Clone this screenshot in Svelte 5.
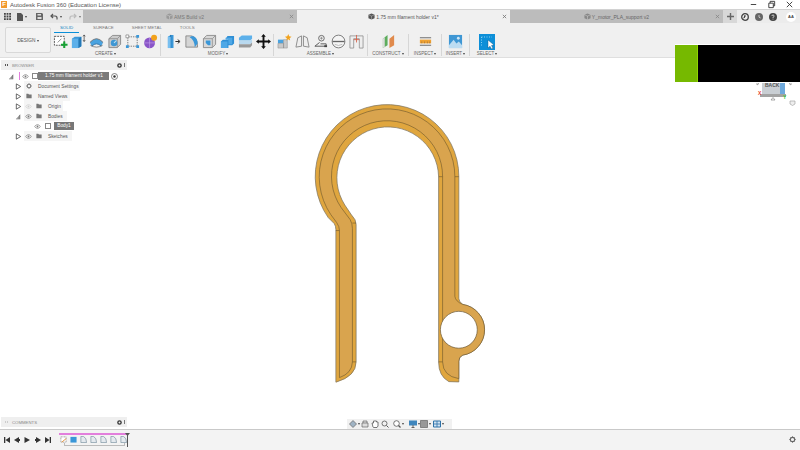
<script>
  const tabs = ['SOLID', 'SURFACE', 'SHEET METAL', 'TOOLS']

  const tree = [
    { name: 'Document Settings', icon: 'gear', width: 56 },
    { name: 'Named Views', icon: 'folder', width: 46 },
    { name: 'Origin', icon: 'folder', width: 39, hidden: true, eye: true },
    { name: 'Bodies', icon: 'folder', width: 43, open: true, eye: true },
    { name: 'Body1', icon: 'body', child: true, eye: true },
    { name: 'Sketches', icon: 'folder', width: 48, eye: true }
  ]

  const timeline = ['sketch', 'box', 'f', 'f', 'f', 'f', 'f']
</script>

{#snippet eye(off)}
  <svg class="eye" class:off viewBox="0 0 8 6"><path d="M.5 3Q4-1.5 7.500 3 4 7.500.5 3Z" fill="none" stroke="#777" stroke-width=".8"/><circle cx="4" cy="3" r="1.100" fill="#777"/></svg>
{/snippet}

{#snippet caret(open)}
  {#if open}
    <svg class="caret" viewBox="0 0 8 8"><path d="M1 7 6 1.500V7Z" fill="#666"/><path d="M3 7V5M4.500 7V3.500" stroke="#fff" stroke-width=".5"/></svg>
  {:else}
    <svg class="caret" viewBox="0 0 8 8"><path d="M1.500 1 6.500 4 1.500 7Z" fill="#fff" stroke="#444" stroke-width=".9"/></svg>
  {/if}
{/snippet}

<div class="app">
  <div class="title">
    <span class="logo">F</span>
    <span class="title-text">Autodesk Fusion 360 (Education License)</span>
    <div class="winctl">
      <svg viewBox="0 0 10 10"><path d="M2 5H8" stroke="#333"/></svg>
      <svg viewBox="0 0 10 10"><path d="M2 3.500H7V8.500H2ZM3.500 3.500V1.500H8.500V6.500H7" fill="none" stroke="#333" stroke-width="1"/></svg>
      <svg viewBox="0 0 10 10"><path d="M2 2 8 8M8 2 2 8" stroke="#333"/></svg>
    </div>
  </div>

  <div class="tabbar">
    <div class="quick">
      <svg width="7" height="7" viewBox="0 0 7 7" fill="#444"><path d="M0 0h1.800v1.800H0zM2.600 0h1.800v1.800H2.600zM5.200 0H7v1.800H5.200zM0 2.600h1.800v1.800H0zM2.600 2.600h1.800v1.800H2.600zM5.200 2.600H7v1.800H5.200zM0 5.200h1.800V7H0zM2.600 5.200h1.800V7H2.600zM5.200 5.200H7V7H5.200z"/></svg>
      <span class="q-file"><svg width="6" height="8" viewBox="0 0 6 8"><path d="M0 0H4L6 2V8H0Z" fill="#555"/></svg><i></i></span>
      <svg class="q-save" width="7" height="7" viewBox="0 0 7 7"><path d="M0 0H6L7 1V7H0Z" fill="#666"/><path d="M1.500 1H5V2.500H1.500ZM1.500 4H5.500V6H1.500Z" fill="#ddd"/></svg>
      <span class="q-undo"><svg width="8" height="7" viewBox="0 0 8 7"><path d="M3 1 1 3 3 5M1 3H5Q7.500 3 7 6.500" fill="none" stroke="#555" stroke-width="1.200"/></svg><i></i></span>
      <span class="q-redo"><svg width="8" height="7" viewBox="0 0 8 7"><path d="M5 1 7 3 5 5M7 3H3Q.5 3 1 6.500" fill="none" stroke="#aaa" stroke-width="1.200"/></svg><i></i></span>
    </div>
    <div class="doc-tab t1">
      <span class="doc-name"><svg class="cube" viewBox="0 0 8 8"><path d="M4 .5 7.500 2V6L4 7.500.5 6V2Z" fill="#999"/><path d="M.5 2 4 3.500 7.500 2M4 3.500V7.500" stroke="#ddd" stroke-width=".5" fill="none"/></svg>AMS Build v2</span>
      <svg class="x" viewBox="0 0 6 6"><path d="M1 1 5 5M5 1 1 5" stroke="#888"/></svg>
    </div>
    <div class="doc-tab active">
      <span class="doc-name"><svg class="cube" viewBox="0 0 8 8"><path d="M4 .5 7.500 2V6L4 7.500.5 6V2Z" fill="#555"/><path d="M.5 2 4 3.500 7.500 2M4 3.500V7.500" stroke="#ccc" stroke-width=".5" fill="none"/></svg>1.75 mm filament holder v1*</span>
      <svg class="x" viewBox="0 0 6 6"><path d="M1 1 5 5M5 1 1 5" stroke="#777"/></svg>
    </div>
    <div class="doc-tab t3">
      <span class="doc-name"><svg class="cube" viewBox="0 0 8 8"><path d="M4 .5 7.500 2V6L4 7.500.5 6V2Z" fill="#888"/><path d="M.5 2 4 3.500 7.500 2M4 3.500V7.500" stroke="#ddd" stroke-width=".5" fill="none"/></svg>Y_motor_PLA_support v2</span>
      <svg class="x" viewBox="0 0 6 6"><path d="M1 1 5 5M5 1 1 5" stroke="#888"/></svg>
    </div>
    <div class="plus">
      <svg width="7" height="7" viewBox="0 0 7 7"><path d="M3.500 0V7M0 3.500H7" stroke="#666" stroke-width="1.400"/></svg>
    </div>
    <div class="account">
      <svg width="8" height="8" viewBox="0 0 8 8"><circle cx="4" cy="4" r="3.300" fill="none" stroke="#444" stroke-width="1.300"/><path d="M4 2V4L2.500 5" stroke="#444"/></svg>
      <svg width="8" height="8" viewBox="0 0 8 8"><circle cx="4" cy="4" r="4" fill="#666"/><path d="M4 2V4.200L5.600 5" stroke="#ddd" fill="none" stroke-width=".8"/></svg>
      <svg width="8" height="8" viewBox="0 0 8 8"><circle cx="4" cy="4" r="4" fill="#444"/><path d="M2.800 3Q3 1.800 4.200 2 5.400 2.300 5 3.300 4 4 4 5M4 5.700V6.500" stroke="#eee" fill="none" stroke-width=".8"/></svg>
      <span class="avatar">AA</span>
    </div>
  </div>

  <div class="ribbon">
    <button class="design">DESIGN <i></i></button>
    <div class="ribbon-main">
      <div class="ribbon-tabs">
        {#each tabs as tab, i}
          <span class="rtab" class:on={i === 0}>{tab}</span>
        {/each}
      </div>
      <div class="groups">
        <div class="group g-create">
          <div class="icons">
            <svg viewBox="0 0 16 16"><path d="M1.500 2.500H12V12H1.500Z" fill="#fff" stroke="#555" stroke-dasharray="2 1"/><path d="M5 9 9 5" stroke="#888"/><path d="M12 8V15M8.500 11.500H15.500" stroke="#18a135" stroke-width="2.200"/></svg>
            <svg viewBox="0 0 16 16"><path d="M1 5 4 3H11V13L8 15H1Z" fill="#3a97d8"/><path d="M1 5H8V15H1Z" fill="#5cb0ea"/><path d="M8 5 11 3V13L8 15Z" fill="#2478b5"/><path d="M14 1V8M12.800 2.500 14 1 15.200 2.500M12.800 6.500 14 8 15.200 6.500" stroke="#444" fill="none" stroke-width=".8"/></svg>
            <svg viewBox="0 0 16 16"><path d="M1 9Q8 1 15 9L13 13Q8 8 3 13Z" fill="#4aa3e0"/><path d="M1 9Q8 1 15 9" stroke="#777" fill="none"/><path d="M3 13Q8 8 13 13" stroke="#2a6fa5" fill="none"/><path d="M1.500 12Q8 16 14.500 12" stroke="#666" stroke-width=".8" fill="none"/></svg>
            <svg viewBox="0 0 16 16"><path d="M2 5 6 1.500H14.500V11L11 14.500H2Z" fill="#ccc" stroke="#777" stroke-width=".8"/><path d="M2 5H11V14.500M11 5 14.500 1.500" stroke="#888" stroke-width=".8" fill="none"/><ellipse cx="7.500" cy="9.500" rx="3.500" ry="3.500" fill="#3f97d4"/><path d="M7.500 9.500 10 7" stroke="#bde" stroke-width="1.200"/></svg>
            <svg viewBox="0 0 16 16"><path d="M3.500 3H12.500M3.500 13H12.500M3 3.500V12.500M13 3.500V12.500" stroke="#777" stroke-dasharray="1.500 1"/><path d="M12 1h3v3h-3zM1 12h3v3H1zM12 12h3v3h-3z" fill="#3a97d8"/><path d="M1 1h3v3H1z" fill="#fff" stroke="#777" stroke-width=".7"/></svg>
            <svg viewBox="0 0 16 16"><circle cx="7" cy="9.500" r="5.800" fill="#8a55c8"/><path d="M1.500 9.500H12.800M7 3.800V15.200" stroke="#c9a9ee" stroke-width=".6"/><circle cx="11.800" cy="4" r="3.200" fill="#f2a21c"/></svg>
          </div>
          <span class="glabel">CREATE <i></i></span>
        </div>
        <div class="group g-modify">
          <div class="icons">
            <svg viewBox="0 0 16 16"><path d="M2 3 5 1H8V15L5 15H2Z" fill="#3a97d8"/><path d="M5 1V15" stroke="#1f6ea8"/><path d="M2 3H5V15H2Z" fill="#78bff0"/><path d="M10 8H14M12.500 6 15 8 12.500 10" stroke="#222" fill="none"/></svg>
            <svg viewBox="0 0 16 16"><path d="M2 2H8Q14.500 3 14.500 14H2Z" fill="#d5d5d5" stroke="#777" stroke-width=".8"/><path d="M8.500 2Q14.500 3 14.500 10L11.500 14Q11 6 6 3.500Z" fill="#3a97d8"/></svg>
            <svg viewBox="0 0 16 16"><path d="M1.500 5 5 1.500H14.500V11L11 14.500H1.500Z" fill="#d8d8d8" stroke="#777" stroke-width=".8"/><path d="M1.500 5H11V14.500M11 5 14.500 1.500" fill="none" stroke="#888" stroke-width=".8"/><path d="M4 7H9V12L6.500 12 4 9.500Z" fill="#3a97d8"/></svg>
            <svg viewBox="0 0 16 16"><path d="M1 8 3 6H9V15H1ZM6 5 8 2H15V10L13 12H9V5Z" fill="#2f8fd5"/><path d="M1 8H8V15H1ZM6 4H13V11H9V6H6Z" fill="#4fa8e6"/></svg>
            <svg viewBox="0 0 16 16"><path d="M1 4 4 1.500H15V5L13 7H1Z" fill="#5cb0ea"/><path d="M1 7H13L15 5V9L13 11H1Z" fill="#b9d9ef"/><path d="M1 11H13L15 9V12L13 14.500H1Z" fill="#999"/></svg>
            <svg viewBox="0 0 16 16" fill="#111"><path d="M8 0 10.500 3H9V7H13V5.500L16 8 13 10.500V9H9V13H10.500L8 16 5.500 13H7V9H3V10.500L0 8 3 5.500V7H7V3H5.500Z"/></svg>
          </div>
          <span class="glabel">MODIFY <i></i></span>
        </div>
        <div class="group g-assemble">
          <div class="icons">
            <svg viewBox="0 0 16 16"><path d="M1 6H7V10H1Z" fill="#4aa3e0"/><path d="M7 6H11V15H7ZM1 10H7V15H1Z" fill="#c9c9c9" stroke="#888" stroke-width=".5"/><path d="M12 0 13 2.500 15.500 3 13.500 4.500 14 7 12 5.500 10 7 10.500 4.500 8.500 3 11 2.500Z" fill="#f2a21c"/></svg>
            <svg viewBox="0 0 16 16"><path d="M1 14 3 4 7 2V13ZM9 2 13 4 15 14 9 13Z" fill="#eee" stroke="#8a8a8a" stroke-width="1"/></svg>
            <svg viewBox="0 0 16 16"><circle cx="9" cy="4.500" r="3" fill="none" stroke="#666"/><path d="M9 3V6M7.500 4.500H10.500" stroke="#666" stroke-width=".6"/><path d="M2 13 7 9M2 13H14V10.500H8" stroke="#555" fill="none"/><path d="M12 13H15" stroke="#444" stroke-width="2"/></svg>
            <svg viewBox="0 0 16 16"><circle cx="8" cy="8" r="6.800" fill="#f4f4f4" stroke="#777"/><path d="M1.500 8H14.500" stroke="#666" stroke-width="1.400"/><path d="M4 11Q8 13.500 12 11" stroke="#bbb" fill="none"/></svg>
            <svg viewBox="0 0 16 16"><path d="M1 2H15V15H11V5H5V15H1Z" fill="#eee" stroke="#888" stroke-width=".8"/><path d="M8 1V9M5 6H11" stroke="#d4614a" stroke-width=".9"/></svg>
          </div>
          <span class="glabel">ASSEMBLE <i></i></span>
        </div>
        <div class="group g-construct">
          <div class="icons">
            <svg viewBox="0 0 16 16"><path d="M2 5 7 1V12L2 15Z" fill="#5dad5d"/><path d="M2 5 4 3.500V13.800L2 15Z" fill="#ddd"/><path d="M9 5 14 1V12L9 15Z" fill="#e08a4c"/></svg>
          </div>
          <span class="glabel">CONSTRUCT <i></i></span>
        </div>
        <div class="group g-inspect">
          <div class="icons">
            <svg viewBox="0 0 16 16"><path d="M2 4H14M2 12H14" stroke="#666"/><path d="M2 6H14V10H2Z" fill="#f0a232"/><path d="M4 8V10M7 8V10M10 8V10M12.500 8V10" stroke="#864" stroke-width=".6"/></svg>
          </div>
          <span class="glabel">INSPECT <i></i></span>
        </div>
        <div class="group g-insert">
          <div class="icons">
            <svg viewBox="0 0 16 16"><path d="M1 1H15V15H1Z" fill="#3f97d4"/><path d="M1 12 6 6 9 10 11.500 8 15 12V15H1Z" fill="#bcdcf2"/><circle cx="11" cy="4.500" r="1.500" fill="#cfe6f6"/></svg>
          </div>
          <span class="glabel">INSERT <i></i></span>
        </div>
        <div class="group g-select">
          <div class="icons">
            <svg viewBox="0 0 16 16"><path d="M0 0H16V16H0Z" fill="#0d8fd8"/><path d="M2.500 3H13M2.500 3V12" stroke="#8ad0f2" stroke-dasharray="1 1.500"/><path d="M9 6 9 14 11 12.200 12.500 15 14 14.300 12.500 11.500 15 11Z" fill="#fff" stroke="#0a4b78" stroke-width=".4"/></svg>
          </div>
          <span class="glabel">SELECT <i></i></span>
        </div>
      </div>
    </div>
  </div>

  <div class="canvas">
    <svg class="model" viewBox="0 57 800 372">
      <path d="M335.700 382V229Q335.700 225.500 334 223L328 217A72 72 0 1 1 459 176V298Q459 301.500 463 304.100A25.700 25.700 0 0 1 463 354.900Q459 356.500 459 361V381.800L449 381.500Q438.700 376 438.700 361.700V176A51 51 0 1 0 344.700 204.500L351.400 214.400Q356 219 356 224V361.700Q356 376 336 382Z" fill="#e0a63e" stroke="#77705f" stroke-width=".7"/>
      <path d="M339.300 377.500V230Q339.300 226 336.500 222L330.600 214A68 68 0 1 1 455 176V296Q455.500 301 463 304.100A25.700 25.700 0 0 1 463 354.900Q459 356.500 459 361V378.500Q443 376 442.700 361.700V176A55.700 55.700 0 1 0 341 207L350 219Q352.300 223 352.300 228V361.700Q352 373 339.300 377.500Z" fill="#d9a44e" stroke="#6b552c" stroke-width=".6"/>
      <path d="M438.700 176H442.700M455 176H459M335.700 230H339.300M352.300 222.500H356M352.300 361.700H356M438.700 361.700H442.700" stroke="#6b552c" stroke-width=".6"/>
      <circle cx="459" cy="329.500" r="18.500" fill="#fff" stroke="#6b5a3a" stroke-width=".7"/>
    </svg>

    <div class="side">
      <div class="browser">
        <div class="panel-head">
          <span class="grip"></span>
          <span class="panel-title">BROWSER</span>
          <svg class="gear" viewBox="0 0 6 6"><circle cx="3" cy="3" r="2" fill="none" stroke="#333" stroke-width="1.600"/></svg>
          <span class="pipe"></span>
        </div>
        <div class="tree">
          <div class="node root">
            {@render caret(true)}
            <span class="pink"></span>
            {@render eye(false)}
            <span class="docbox"></span>
            <span class="root-label">1.75 mm filament holder v1</span>
            <svg class="radio" viewBox="0 0 7 7"><circle cx="3.500" cy="3.500" r="3" fill="#fff" stroke="#555" stroke-width=".7"/><circle cx="3.500" cy="3.500" r="1.200" fill="#333"/></svg>
          </div>
          {#each tree as row}
            <div class="node" class:child={row.child}>
              {#if row.child}
                {@render eye(false)}
                <span class="docbox small"></span>
                <span class="body-label">{row.name}</span>
              {:else}
                {@render caret(row.open)}
                <span class="pill" class:bare={!row.eye} style="width: {row.width}px">
                  {#if row.eye}{@render eye(row.hidden)}{/if}
                  {#if row.icon === 'gear'}
                    <svg class="ficon" viewBox="0 0 8 8"><circle cx="4" cy="4" r="2.500" fill="none" stroke="#666" stroke-width="1.300"/><path d="M4 0V8M0 4H8M1.200 1.200 6.800 6.800M6.800 1.200 1.200 6.800" stroke="#666" stroke-width=".7" stroke-dasharray="1.200 5.600"/></svg>
                  {:else}
                    <svg class="ficon" viewBox="0 0 8 7"><path d="M.5 .5H3L4 1.500H7.500V6.500H.5Z" fill="#777"/></svg>
                  {/if}
                  <span class="node-label">{row.name}</span>
                </span>
              {/if}
            </div>
          {/each}
        </div>
      </div>

      <div class="panel-head">
        <span class="grip pale"></span>
        <span class="panel-title">COMMENTS</span>
        <svg class="gear" viewBox="0 0 6 6"><circle cx="3" cy="3" r="2" fill="none" stroke="#333" stroke-width="1.600"/></svg>
        <span class="pipe"></span>
      </div>
    </div>

    <div class="viewcube">
      <svg viewBox="0 0 44 26" width="44" height="26">
        <path d="M7 0H30V13H7Z" fill="#c9ced3"/>
        <path d="M25 0H30V13H25Z" fill="#6ea9dc"/>
        <path d="M5 12H31V15H5Z" fill="#a3a3a3"/>
        <path d="M2 0 4 1.500 2 3ZM34 1.500 36 0V3Z" fill="none" stroke="#888" stroke-width=".7"/>
        <path d="M16 18 18 15.500 20 18Z" fill="none" stroke="#888" stroke-width=".7"/>
        <text x="10" y="4.500" class="cube-text">BACK</text>
        <text x="3" y="13" class="axis-x">X</text>
        <text x="28" y="16.500" class="axis-y">Y</text>
        <path d="M35 19H40V22L37.500 23.500 35 22Z" fill="#eee" stroke="#999" stroke-width=".6"/>
      </svg>
    </div>

    <div class="promo"><span class="promo-green"></span><span class="promo-black"></span></div>

    <div class="navbar">
      <svg viewBox="0 0 8 8" class="n8"><path d="M4 .5 7.500 4 4 7.500.5 4Z" fill="#9fb3c4" stroke="#666" stroke-width=".7"/></svg><i></i>
      <svg viewBox="0 0 8 8" class="n8 m1"><path d="M1 3H7V7H1ZM2 3V1H6V3" fill="#ddd" stroke="#666" stroke-width=".7"/></svg>
      <svg viewBox="0 0 8 8" class="n8 m2"><path d="M2 7 1 3H2.500V1H5.500V2H7V6L6 7.500H2.500Z" fill="#fff" stroke="#555" stroke-width=".8"/></svg>
      <svg viewBox="0 0 8 8" class="n8 m2"><circle cx="3.500" cy="3.500" r="2.500" fill="none" stroke="#555" stroke-width=".8"/><path d="M5.500 5.500 7.500 7.500" stroke="#555"/></svg>
      <svg viewBox="0 0 8 8" class="n8 m4"><circle cx="3.500" cy="3.500" r="2.800" fill="#fff" stroke="#555" stroke-width=".8"/><path d="M5.500 5.500 7.500 7.500" stroke="#555" stroke-width="1.200"/></svg><i></i>
      <svg viewBox="0 0 8 8" class="n8 m5"><path d="M0 .5H8V5.500H0Z" fill="#3f86bd"/><path d="M2.500 7.500H5.500M4 5V7.500" stroke="#666"/></svg><i></i>
      <svg viewBox="0 0 8 8" class="n8"><path d="M.5 .5H7.500V7.500H.5Z" fill="#999" stroke="#666" stroke-width=".7"/></svg><i></i>
      <svg viewBox="0 0 8 8" class="n8 m2"><path d="M.5 1H7.500V7H.5Z" fill="#cfe2f2" stroke="#2f72a8"/><path d="M4 1V7M.5 4H7.500" stroke="#2f72a8" stroke-width=".8"/></svg><i></i>
    </div>
  </div>

  <div class="timeline">
    <div class="controls">
      <svg viewBox="0 0 6 6"><path d="M0 0H1.300V6H0ZM6 0V6L1.500 3Z" fill="#333"/></svg>
      <svg viewBox="0 0 6 6"><path d="M5 0V6L0 3Z" fill="#333"/><path d="M4 2H6V4H4Z" fill="#333"/></svg>
      <svg viewBox="0 0 6 6"><path d="M.5 0V6L6 3Z" fill="#333"/></svg>
      <svg viewBox="0 0 6 6"><path d="M1 0V6L6 3Z" fill="#333"/><path d="M0 2H2V4H0Z" fill="#333"/></svg>
      <svg viewBox="0 0 6 6"><path d="M0 0V6L4.500 3ZM4.700 0H6V6H4.700Z" fill="#333"/></svg>
    </div>
    <div class="track">
      <span class="track-pink"></span>
      <div class="steps">
        {#each timeline as step}
          <svg viewBox="0 0 8 8">
            {#if step === 'sketch'}
              <path d="M1 1H7V7H1Z" fill="#fff" stroke="#777" stroke-width=".7" stroke-dasharray="1.200 .6"/><path d="M2 7 7 3" stroke="#e58a2a"/>
            {:else if step === 'box'}
              <path d="M.5 1H7.500V7.500H.5Z" fill="#3a97d8"/>
            {:else}
              <path d="M1 .5H4Q7.500 2 7.500 7.500H1Z" fill="#e4e9ee" stroke="#6b8396" stroke-width=".7"/>
            {/if}
          </svg>
        {/each}
      </div>
      <span class="bracket"></span>
      <svg class="marker" viewBox="0 0 5 14"><path d="M0 0H5L3 2.500V14H2V2.500Z" fill="#555"/></svg>
    </div>
    <svg class="tl-gear" viewBox="0 0 8 8"><circle cx="4" cy="4" r="2.500" fill="none" stroke="#666" stroke-width="1.300"/><path d="M4 0V8M0 4H8M1.200 1.200 6.800 6.800M6.800 1.200 1.200 6.800" stroke="#666" stroke-width=".7" stroke-dasharray="1.200 5.600"/></svg>
  </div>
</div>

<style>
  :global(body) {
    margin: 0;
  }

  .app {
    width: 800px;
    height: 450px;
    display: flex;
    flex-direction: column;
    overflow: hidden;
    background: #fff;
    font-family: "Liberation Sans", Arial, sans-serif;
    color: #555;
  }

  /* title bar */
  .title {
    height: 9px;
    display: flex;
    align-items: center;
    background: #fff;
    font-size: 6px;
    flex: none;
  }

  .logo {
    width: 6px;
    height: 7px;
    margin-left: 1px;
    background: #f29a2e;
    color: #fff;
    font-size: 6px;
    font-weight: 700;
    line-height: 7px;
    text-align: center;
  }

  .title-text {
    margin-left: 3px;
    color: #555;
  }

  .winctl {
    margin-left: auto;
    margin-right: 6px;
    display: flex;
    gap: 9px;
  }

  .winctl svg {
    width: 9px;
    height: 9px;
  }

  /* tabs */
  .tabbar {
    height: 13px;
    display: flex;
    flex: none;
    background: #bcbcbc;
    border-top: 1px solid #d2d2d2;
    font-size: 5px;
  }

  .quick {
    width: 83px;
    display: flex;
    align-items: center;
    padding-left: 4px;
    background: #e6e6e6;
    box-sizing: border-box;
  }

  .quick i,
  .glabel i,
  .design i,
  .navbar i {
    display: inline-block;
    width: 0;
    height: 0;
    border: 1.500px solid transparent;
    border-top: 2px solid #444;
    border-bottom: 0;
  }

  .quick span {
    display: flex;
    align-items: center;
    gap: 2px;
  }

  .q-file {
    margin-left: 6px;
  }

  .q-save {
    margin-left: 9px;
  }

  .q-undo {
    margin-left: 7px;
  }

  .q-redo {
    margin-left: 7px;
    opacity: .7;
  }

  .doc-tab {
    position: relative;
    display: flex;
    align-items: center;
    justify-content: center;
    color: #777;
  }

  .t1 {
    width: 214px;
    padding-right: 10px;
    box-sizing: border-box;
  }

  .t3 {
    width: 213px;
    color: #666;
  }

  .active {
    width: 213px;
    background: #f0f0f0;
    color: #555;
  }

  .doc-name {
    display: flex;
    align-items: center;
    gap: 1px;
  }

  .cube {
    width: 7px;
    height: 7px;
  }

  .x {
    position: absolute;
    right: 3px;
    top: 4px;
    width: 5px;
    height: 5px;
  }

  .plus {
    width: 14px;
    display: flex;
    align-items: center;
    justify-content: center;
    background: #d8d8d8;
  }

  .account {
    flex: 1;
    display: flex;
    align-items: center;
    gap: 6px;
    padding-left: 4px;
    background: #ececec;
  }

  .avatar {
    width: 10px;
    height: 10px;
    margin-left: 3px;
    border-radius: 50%;
    background: #fff;
    color: #444;
    font-size: 4px;
    font-weight: 700;
    line-height: 10px;
    text-align: center;
  }

  /* ribbon */
  .ribbon {
    height: 34px;
    display: flex;
    flex: none;
    background: #f0f0f0;
    border-bottom: 1px solid #dfdfdf;
  }

  .design {
    width: 46px;
    height: 26px;
    margin: 4px 0 0 5px;
    padding: 0;
    background: #f3f3f3;
    border: 1px solid #d8d8d8;
    border-radius: 2px;
    font-family: inherit;
    font-size: 4.800px;
    color: #555;
  }

  .ribbon-main {
    display: flex;
    flex-direction: column;
  }

  .ribbon-tabs {
    height: 11px;
    display: flex;
    font-size: 4.400px;
    color: #777;
    line-height: 9px;
  }

  .rtab {
    margin-left: 18px;
  }

  .rtab.on {
    width: 25px;
    margin-left: 3px;
    text-align: center;
    color: #0a7fc2;
    border-bottom: 1px solid #0a8fd8;
    box-sizing: border-box;
    height: 10px;
  }

  .rtab.on + .rtab {
    margin-left: 14px;
  }

  .groups {
    display: flex;
  }

  .group {
    display: flex;
    flex-direction: column;
    align-items: center;
    box-sizing: border-box;
    border-right: 1px solid #d6d6d6;
    height: 22px;
  }

  .g-create {
    width: 110px;
  }

  .g-modify {
    width: 113px;
    padding-left: 2px;
  }

  .g-assemble {
    width: 94px;
  }

  .g-construct {
    width: 41px;
  }

  .g-inspect {
    width: 33px;
  }

  .g-insert {
    width: 28px;
  }

  .g-select {
    width: 34px;
    border-right: 0;
  }

  .icons {
    height: 16px;
    display: flex;
    gap: 3px;
  }

  .icons svg {
    width: 15px;
    height: 15px;
  }

  .g-select .icons svg {
    width: 16px;
    height: 16px;
  }

  .glabel {
    margin-top: 1px;
    font-size: 4.500px;
    line-height: 5px;
    color: #666;
    white-space: nowrap;
  }

  /* viewport */
  .canvas {
    position: relative;
    flex: 1;
    background: #fff;
  }

  .model {
    position: absolute;
    inset: 0;
    width: 100%;
    height: 100%;
  }

  .side {
    position: absolute;
    left: 1px;
    top: 2px;
    bottom: 2px;
    width: 126px;
    display: flex;
    flex-direction: column;
    justify-content: space-between;
  }

  .panel-head {
    height: 10px;
    display: flex;
    align-items: center;
    background: #efefef;
    font-size: 4.300px;
    color: #888;
  }

  .grip {
    width: 1px;
    height: 2px;
    margin-left: 4px;
    border-left: 1px solid #555;
    border-right: 1px solid #555;
  }

  .grip.pale {
    border-color: #ccc;
  }

  .panel-title {
    margin-left: 4px;
  }

  .gear {
    width: 5px;
    height: 5px;
    margin-left: auto;
  }

  .pipe {
    width: 1px;
    height: 4px;
    margin: 0 2px 0 2px;
    background: #777;
  }

  .tree {
    margin-top: 1px;
  }

  .node {
    height: 10px;
    display: flex;
    align-items: center;
    padding-left: 14px;
    font-size: 4.800px;
    color: #555;
  }

  .caret {
    width: 7px;
    height: 7px;
    margin-right: 2px;
  }

  .root {
    margin-top: 1px;
    padding-left: 7px;
  }

  .pink {
    width: 1px;
    height: 8px;
    margin-left: 2px;
    background: #e27fdc;
  }

  .eye {
    width: 7px;
    height: 5px;
    margin: 0 2px;
  }

  .eye.off {
    opacity: .3;
  }

  .docbox {
    width: 6px;
    height: 6px;
    margin-left: 1px;
    background: #fff;
    border: 1px solid #888;
    box-sizing: border-box;
    flex: none;
  }

  .docbox.small {
    margin-left: 2px;
  }

  .root-label {
    width: 71px;
    height: 8px;
    padding-left: 7px;
    box-sizing: border-box;
    background: #7b7b7b;
    color: #fff;
    font-size: 4.800px;
    line-height: 8px;
    white-space: nowrap;
  }

  .radio {
    width: 7px;
    height: 7px;
    margin-left: 2px;
  }

  .pill {
    height: 10px;
    display: flex;
    align-items: center;
    padding-left: 1px;
    background: #f5f5f5;
    box-sizing: border-box;
  }

  .pill.bare {
    padding-left: 2px;
  }

  .pill .eye {
    margin: 0 4px 0 0;
  }

  .ficon {
    width: 6px;
    height: 6px;
    flex: none;
  }

  .node-label {
    margin-left: 6px;
    white-space: nowrap;
  }

  .child {
    padding-left: 31px;
  }

  .body-label {
    width: 20px;
    height: 8px;
    margin-left: 3px;
    background: #777;
    color: #fff;
    line-height: 8px;
    text-align: center;
  }

  .promo {
    position: absolute;
    right: 0;
    top: -14px;
    width: 125px;
    height: 39px;
    display: flex;
    box-sizing: border-box;
    border-top: 1px solid #fff;
    border-bottom: 1px solid #fff;
  }

  .promo-green {
    width: 22px;
    background: #76b900;
    border-right: 1px solid #8fd400;
  }

  .promo-black {
    flex: 1;
    background: #000;
  }

  .viewcube {
    position: absolute;
    left: 755px;
    top: 24px;
    height: 26px;
  }

  .cube-text {
    font-size: 5px;
    font-weight: 700;
    fill: #555;
  }

  .axis-x {
    font-size: 5px;
    font-weight: 700;
    fill: #e8402a;
  }

  .axis-y {
    font-size: 5px;
    font-weight: 700;
    fill: #2ecc40;
  }

  .navbar {
    position: absolute;
    left: 347px;
    top: 361px;
    width: 105px;
    height: 10px;
    display: flex;
    align-items: center;
    padding-left: 2px;
    box-sizing: border-box;
    background: #f1f1f1;
  }

  .navbar i {
    margin-left: 1px;
    flex: none;
  }

  .n8 {
    width: 8px;
    height: 8px;
    flex: none;
  }

  .m1 {
    margin-left: 1px;
  }

  .m2 {
    margin-left: 2px;
  }

  .m4 {
    margin-left: 4px;
  }

  .m5 {
    margin-left: 5px;
  }

  /* timeline */
  .timeline {
    height: 21px;
    flex: none;
    position: relative;
    display: flex;
    align-items: center;
    background: #f3f3f3;
    border-top: 1px solid #c9c9c9;
    box-sizing: border-box;
  }

  .controls {
    display: flex;
    gap: 4.200px;
    margin-left: 4px;
  }

  .controls svg {
    width: 6px;
    height: 6px;
  }

  .track {
    position: relative;
    width: 72px;
    height: 18px;
    margin-left: 8px;
  }

  .track-pink {
    position: absolute;
    left: 0;
    top: 2px;
    width: 68px;
    height: 2px;
    background: #e27fdc;
  }

  .steps {
    position: absolute;
    left: 1px;
    top: 5px;
    display: flex;
    gap: 3px;
  }

  .steps svg {
    width: 7px;
    height: 7px;
  }

  .bracket {
    position: absolute;
    left: 5px;
    top: 12px;
    width: 59px;
    height: 2px;
    border: 1px solid #bbb;
    border-top: 0;
  }

  .marker {
    position: absolute;
    left: 66px;
    top: 2px;
    width: 5px;
    height: 14px;
  }

  .tl-gear {
    position: absolute;
    right: 4px;
    top: 6px;
    width: 7px;
    height: 7px;
  }
</style>
